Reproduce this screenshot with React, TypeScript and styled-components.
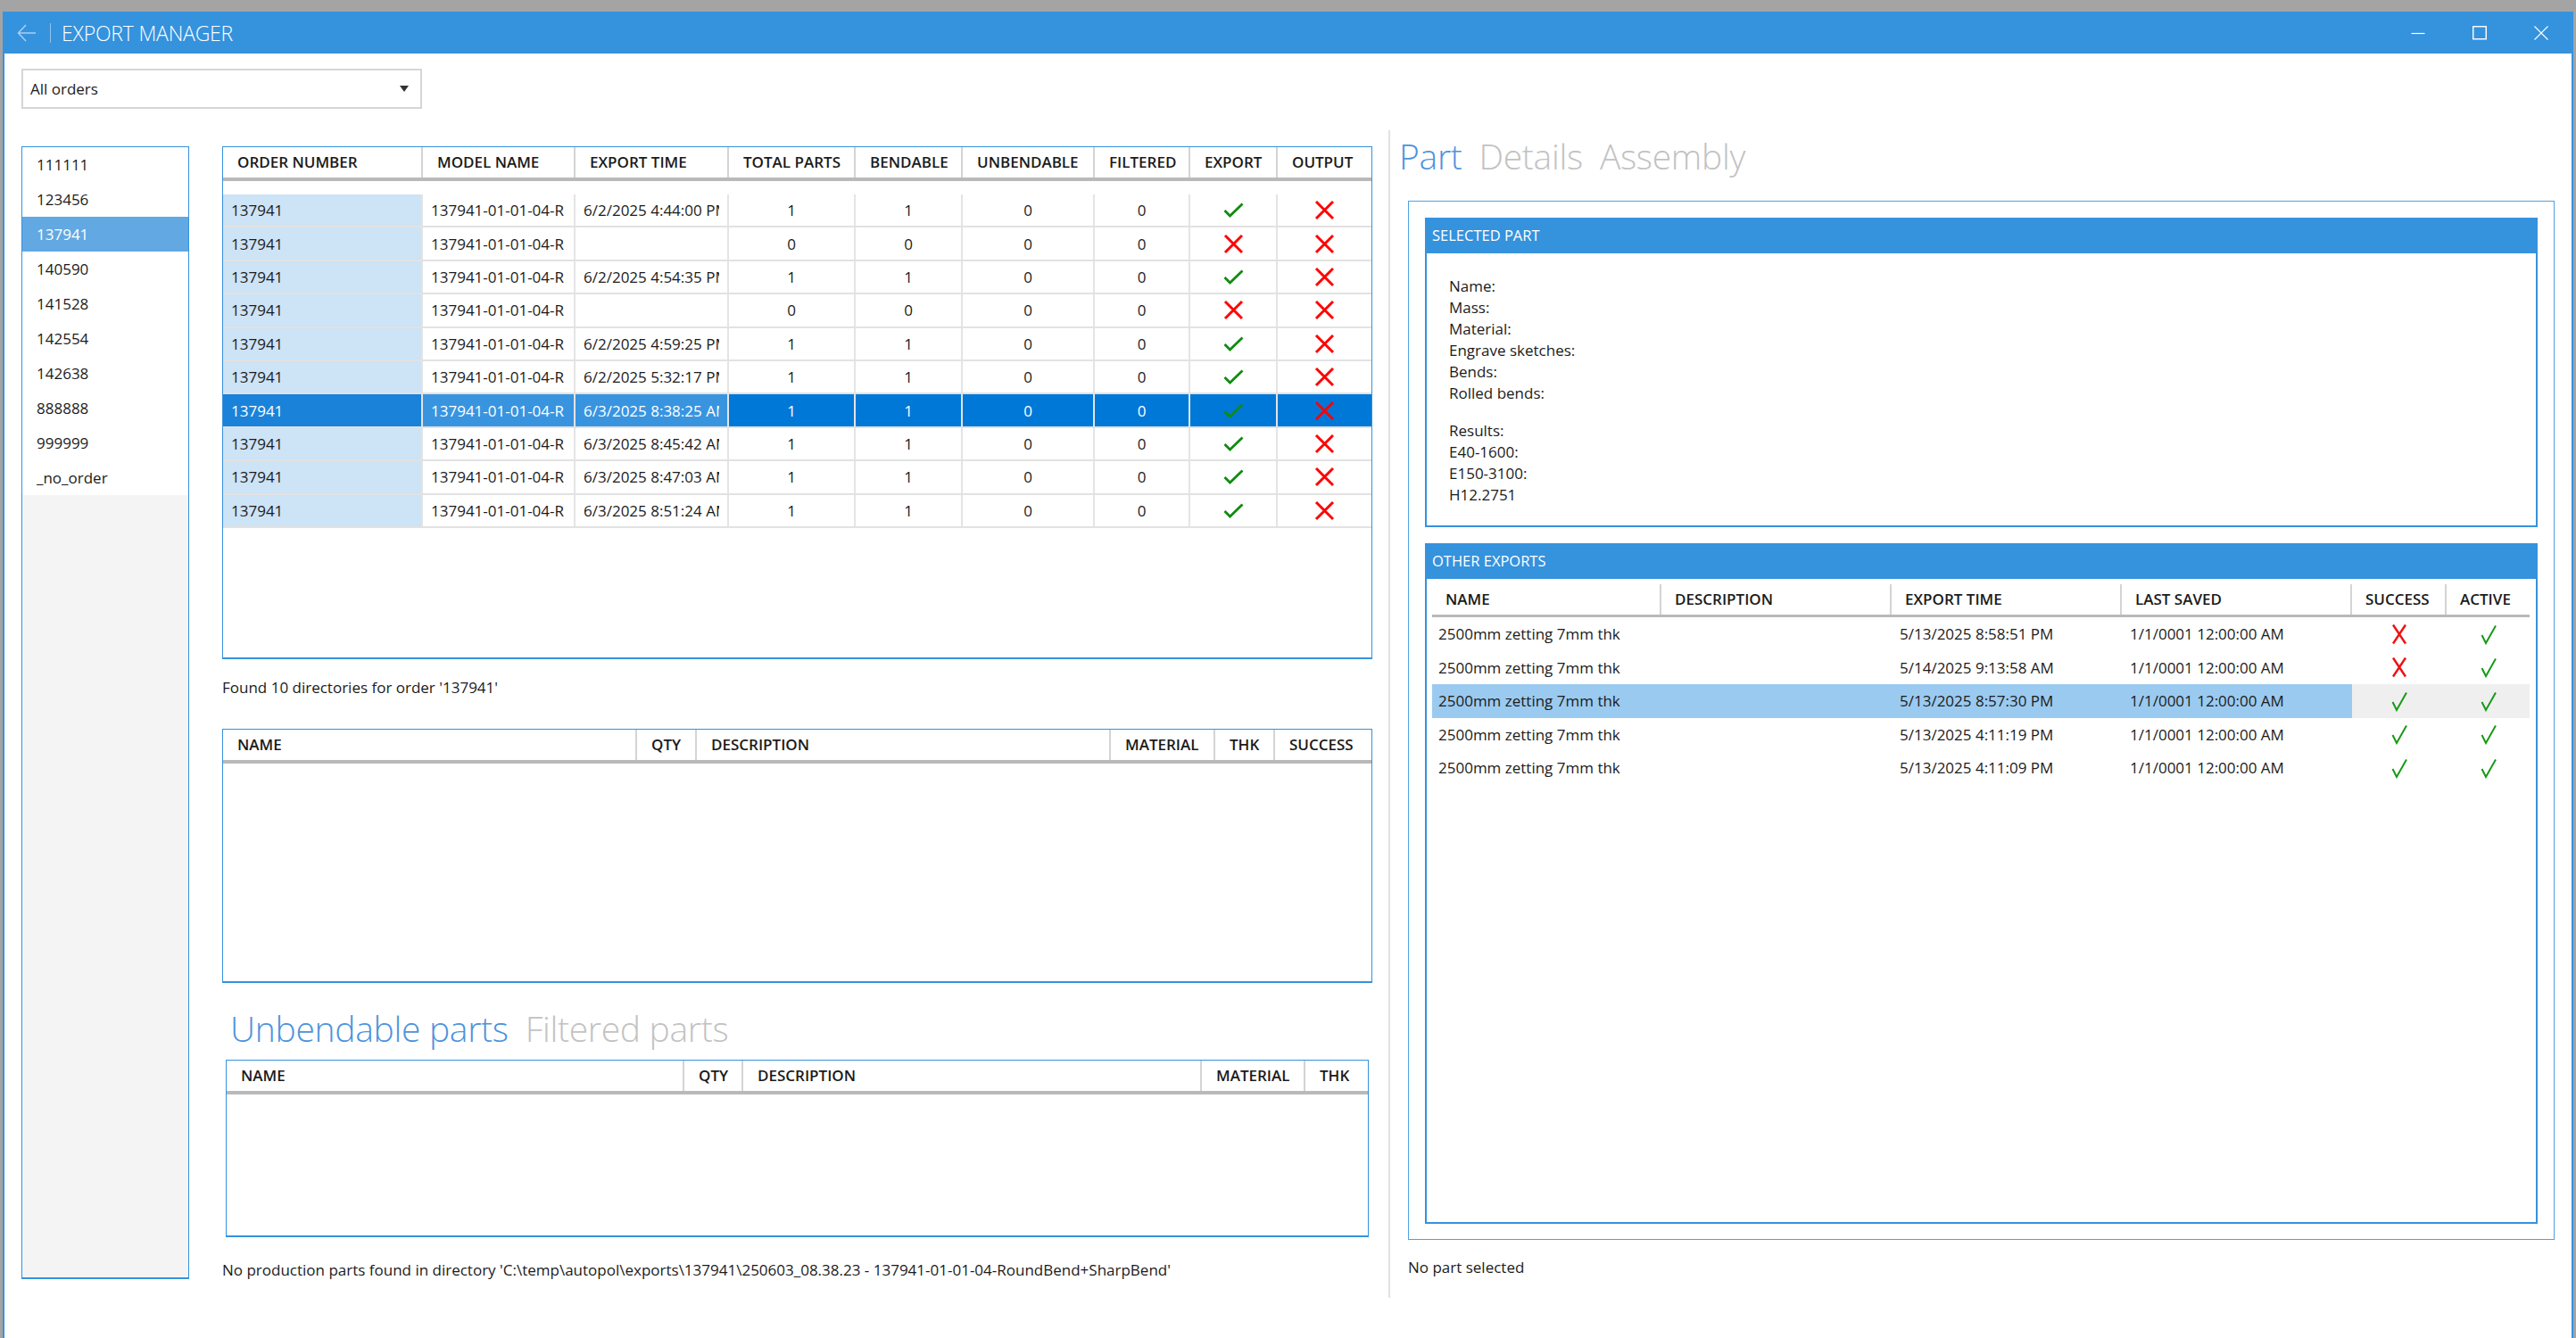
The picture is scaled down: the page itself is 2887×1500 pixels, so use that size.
import React from 'react';
import styled, { createGlobalStyle } from 'styled-components';

const BLUE = '#3592dd';
const FONT = '"Open Sans", "Noto Sans", "Liberation Sans", sans-serif';

const GlobalStyle = createGlobalStyle`
  html, body {
    margin: 0;
    padding: 0;
    background: #a4a4a4;
  }
  body {
    font-family: ${FONT};
    font-size: 17px;
    color: #1b1b1b;
  }
  * {
    box-sizing: border-box;
  }
`;

const Frame = styled.div`
  height: 1500px;
  padding: 13px 3px 0 3px;
`;

const Window = styled.div`
  height: 100%;
  background: #fff;
  border-left: 2px solid ${BLUE};
  border-right: 2px solid ${BLUE};
  display: flex;
  flex-direction: column;
`;

const TitleBar = styled.div`
  height: 47px;
  flex-shrink: 0;
  background: ${BLUE};
  display: flex;
  align-items: center;
  padding-left: 14px;
  color: #fff;
`;

const TitleDivider = styled.div`
  width: 1px;
  height: 22px;
  background: rgba(255, 255, 255, 0.45);
  margin: 0 12px 0 15px;
`;

const Title = styled.div`
  font-size: 23px;
  font-weight: 300;
  letter-spacing: -0.2px;
  flex: 1;
`;

const Controls = styled.div`
  display: flex;
  height: 100%;
`;

const ControlButton = styled.div`
  width: 69px;
  height: 100%;
  display: flex;
  align-items: center;
  justify-content: center;
`;

const Toolbar = styled.div`
  height: 86px;
  flex-shrink: 0;
  padding: 17px 0 0 19px;
`;

const Dropdown = styled.div`
  width: 449px;
  height: 45px;
  border: 2px solid #d6d6d6;
  display: flex;
  align-items: center;
  justify-content: space-between;
  padding: 0 13px 0 8px;
  font-size: 17px;
`;

const Caret = styled.div`
  width: 0;
  height: 0;
  border-left: 5px solid transparent;
  border-right: 5px solid transparent;
  border-top: 7px solid #333;
`;

const Main = styled.div`
  flex: 1;
  display: flex;
  min-height: 0;
`;

const LeftArea = styled.div`
  display: flex;
  gap: 37px;
  padding: 18px 18px 0 19px;
`;

const OrderList = styled.div`
  width: 188px;
  height: 1270px;
  border: 1px solid ${BLUE};
  border-bottom-width: 2px;
  background: #f4f4f4;
  display: flex;
  flex-direction: column;
`;

const OrderItem = styled.div<{ $selected?: boolean }>`
  height: 39px;
  line-height: 39px;
  padding-left: 16px;
  font-size: 17px;
  background: ${p => (p.$selected ? '#62a8e2' : '#fff')};
  color: ${p => (p.$selected ? '#fff' : '#1b1b1b')};
`;

const Middle = styled.div`
  width: 1289px;
  display: flex;
  flex-direction: column;
`;

const TableBox = styled.div<{ $height: number; $inset?: number; $top?: number }>`
  height: ${p => p.$height}px;
  margin: ${p => p.$top ?? 0}px ${p => p.$inset ?? 0}px 0;
  border: 1px solid ${BLUE};
  border-bottom-width: 2px;
  background: #fff;
  overflow: hidden;
  flex-shrink: 0;
`;

const HeaderRow = styled.div<{ $cols: string; $line?: number }>`
  display: grid;
  grid-template-columns: ${p => p.$cols};
  height: ${p => 34 + (p.$line ?? 4)}px;
  border-bottom: ${p => p.$line ?? 4}px solid #b9b9b9;
  background: #fff;
`;

const HeaderCell = styled.div<{ $pad?: number }>`
  padding-left: ${p => p.$pad ?? 16}px;
  line-height: 34px;
  font-size: 17px;
  font-weight: 600;
  color: #1a1a1a;
  white-space: nowrap;
  overflow: hidden;
  border-right: 2px solid #d4d4d4;
  &:last-child {
    border-right: none;
  }
`;

const HeaderGap = styled.div`
  height: 15px;
`;

const BodyRow = styled.div<{ $cols: string; $height?: number; $lined?: boolean }>`
  display: grid;
  grid-template-columns: ${p => p.$cols};
  height: ${p => p.$height ?? 37.4}px;
  border-bottom: ${p => (p.$lined ? '2px solid #e2e2e2' : 'none')};
`;

type Tone = 'key' | 'mid' | 'plain';

const selectedBg: Record<Tone, string> = {
  key: '#1a82d9',
  mid: '#3994e0',
  plain: '#0078d7',
};

const Cell = styled.div<{ $tone?: Tone; $selected?: boolean; $center?: boolean; $lined?: boolean; $bg?: string; $padLeft?: number }>`
  display: flex;
  align-items: center;
  justify-content: ${p => (p.$center ? 'center' : 'flex-start')};
  padding: 0 9px 0 ${p => p.$padLeft ?? 9}px;
  min-width: 0;
  font-size: 17px;
  color: ${p => (p.$selected ? '#fff' : '#1b1b1b')};
  background: ${p =>
    p.$bg
      ? p.$bg
      : p.$selected
      ? selectedBg[p.$tone ?? 'plain']
      : p.$tone === 'key'
      ? '#cde3f6'
      : 'transparent'};
  border-right: ${p => (p.$lined ? '2px solid #e4e4e4' : 'none')};
  &:last-child {
    border-right: none;
  }
`;

const CellText = styled.span`
  display: block;
  overflow: hidden;
  white-space: nowrap;
`;

const StatusText = styled.div<{ $top: number; $left?: number }>`
  margin-top: ${p => p.$top}px;
  margin-left: ${p => p.$left ?? 0}px;
  line-height: 24px;
  font-size: 17px;
  white-space: nowrap;
`;

const TabHeading = styled.div<{ $top: number; $left: number; $height: number }>`
  display: flex;
  gap: 19px;
  margin-top: ${p => p.$top}px;
  margin-left: ${p => p.$left}px;
  height: ${p => p.$height}px;
  line-height: 46px;
  font-size: 39px;
  font-weight: 300;
  letter-spacing: -0.3px;
  flex-shrink: 0;
`;

const Tab = styled.span<{ $active?: boolean }>`
  color: ${p => (p.$active ? '#4d93dc' : '#c2c2c2')};
`;

const Separator = styled.div`
  width: 2px;
  height: 1309px;
  background: #e2e2e2;
  flex-shrink: 0;
`;

const RightArea = styled.div`
  width: 1305px;
  padding-left: 10px;
  display: flex;
  flex-direction: column;
`;

const OuterBox = styled.div`
  margin-left: 10px;
  width: 1285px;
  height: 1165px;
  border: 1.5px solid #4da2e4;
  padding: 18px 18px 17px 18px;
  display: flex;
  flex-direction: column;
  gap: 18px;
`;

const Panel = styled.div<{ $height: number }>`
  height: ${p => p.$height}px;
  border: 2px solid ${BLUE};
  border-top: none;
  display: flex;
  flex-direction: column;
  flex-shrink: 0;
`;

const PanelHeader = styled.div`
  height: 40px;
  background: ${BLUE};
  color: #fff;
  font-size: 16.5px;
  line-height: 40px;
  margin: 0 -2px;
  padding-left: 8px;
`;

const PartInfo = styled.div`
  padding: 25px 0 0 25px;
  display: flex;
  flex-direction: column;
`;

const InfoLine = styled.div<{ $gapBefore?: boolean }>`
  line-height: 24px;
  font-size: 17px;
  margin-top: ${p => (p.$gapBefore ? 18 : 0)}px;
`;

const ExportsTable = styled.div`
  margin: 6px 7px 0 6px;
`;

const GreenCheck = ({ thin }: { thin?: boolean }) =>
  thin ? (
    <svg width="20" height="24" viewBox="0 0 20 24">
      <path d="M2.5 13 L7 22 L18 2.5" fill="none" stroke="#169a16" strokeWidth="2" />
    </svg>
  ) : (
    <svg width="23" height="17" viewBox="0 0 23 17">
      <path d="M1.5 9 L7.5 15 L21.5 1.5" fill="none" stroke="#0f8c0f" strokeWidth="2.8" />
    </svg>
  );

const RedCross = ({ thin }: { thin?: boolean }) =>
  thin ? (
    <svg width="20" height="24" viewBox="0 0 20 24">
      <path d="M3 1.5 L17 22.5 M17 1.5 L3 22.5" fill="none" stroke="#ee1111" strokeWidth="2.4" />
    </svg>
  ) : (
    <svg width="23" height="23" viewBox="0 0 23 23">
      <path d="M2 2 L21 21 M21 2 L2 21" fill="none" stroke="#ff0000" strokeWidth="3" />
    </svg>
  );

const orders = ['111111', '123456', '137941', '140590', '141528', '142554', '142638', '888888', '999999', '_no_order'];

const mainCols = '224px 171px 172px 142px 120px 148px 107px 98px 1fr';
const mainHeaders = ['ORDER NUMBER', 'MODEL NAME', 'EXPORT TIME', 'TOTAL PARTS', 'BENDABLE', 'UNBENDABLE', 'FILTERED', 'EXPORT', 'OUTPUT'];

interface ExportRow {
  time: string;
  total: number;
  exported: boolean;
}

const exportRows: ExportRow[] = [
  { time: '6/2/2025 4:44:00 PM', total: 1, exported: true },
  { time: '', total: 0, exported: false },
  { time: '6/2/2025 4:54:35 PM', total: 1, exported: true },
  { time: '', total: 0, exported: false },
  { time: '6/2/2025 4:59:25 PM', total: 1, exported: true },
  { time: '6/2/2025 5:32:17 PM', total: 1, exported: true },
  { time: '6/3/2025 8:38:25 AM', total: 1, exported: true },
  { time: '6/3/2025 8:45:42 AM', total: 1, exported: true },
  { time: '6/3/2025 8:47:03 AM', total: 1, exported: true },
  { time: '6/3/2025 8:51:24 AM', total: 1, exported: true },
];

const partsCols = '464px 67px 464px 117px 67px 1fr';
const partsHeaders = ['NAME', 'QTY', 'DESCRIPTION', 'MATERIAL', 'THK', 'SUCCESS'];

const unbendCols = '513px 66px 514px 116px 1fr';
const unbendHeaders = ['NAME', 'QTY', 'DESCRIPTION', 'MATERIAL', 'THK'];

const otherCols = '257px 258px 258px 258px 106px 1fr';
const otherHeaders = ['NAME', 'DESCRIPTION', 'EXPORT TIME', 'LAST SAVED', 'SUCCESS', 'ACTIVE'];

const otherExports = [
  { time: '5/13/2025 8:58:51 PM', success: false },
  { time: '5/14/2025 9:13:58 AM', success: false },
  { time: '5/13/2025 8:57:30 PM', success: true },
  { time: '5/13/2025 4:11:19 PM', success: true },
  { time: '5/13/2025 4:11:09 PM', success: true },
];

const partFields = ['Name:', 'Mass:', 'Material:', 'Engrave sketches:', 'Bends:', 'Rolled bends:'];
const resultFields = ['Results:', 'E40-1600:', 'E150-3100:', 'H12.2751'];

const SELECTED_EXPORT = 6;
const SELECTED_OTHER = 2;

export default function App() {
  return (
    <Frame>
      <GlobalStyle />
      <Window>
        <TitleBar>
          <svg width="22" height="20" viewBox="0 0 22 20">
            <path d="M10 1 L1.5 10 L10 19 M1.5 10 H21" fill="none" stroke="#a8d0f2" strokeWidth="1.5" />
          </svg>
          <TitleDivider />
          <Title>EXPORT MANAGER</Title>
          <Controls>
            <ControlButton>
              <svg width="16" height="16" viewBox="0 0 16 16">
                <path d="M0.5 8.5 H15.5" stroke="#fff" strokeWidth="1.2" />
              </svg>
            </ControlButton>
            <ControlButton>
              <svg width="16" height="16" viewBox="0 0 16 16">
                <rect x="0.75" y="0.75" width="14.5" height="14" fill="none" stroke="#fff" strokeWidth="1.4" />
              </svg>
            </ControlButton>
            <ControlButton>
              <svg width="16" height="16" viewBox="0 0 16 16">
                <path d="M0.5 0.5 L15.5 15.5 M15.5 0.5 L0.5 15.5" stroke="#fff" strokeWidth="1.1" />
              </svg>
            </ControlButton>
          </Controls>
        </TitleBar>

        <Toolbar>
          <Dropdown>
            <span>All orders</span>
            <Caret />
          </Dropdown>
        </Toolbar>

        <Main>
          <LeftArea>
            <OrderList>
              {orders.map(o => (
                <OrderItem key={o} $selected={o === '137941'}>
                  {o}
                </OrderItem>
              ))}
            </OrderList>

            <Middle>
              <TableBox $height={575}>
                <HeaderRow $cols={mainCols}>
                  {mainHeaders.map(h => (
                    <HeaderCell key={h}>{h}</HeaderCell>
                  ))}
                </HeaderRow>
                <HeaderGap />
                {exportRows.map((r, i) => {
                  const sel = i === SELECTED_EXPORT;
                  return (
                    <BodyRow key={i} $cols={mainCols} $lined>
                      <Cell $tone="key" $selected={sel} $lined>
                        <CellText>137941</CellText>
                      </Cell>
                      <Cell $tone="mid" $selected={sel} $lined>
                        <CellText>137941-01-01-04-R</CellText>
                      </Cell>
                      <Cell $tone="mid" $selected={sel} $lined>
                        <CellText>{r.time}</CellText>
                      </Cell>
                      <Cell $center $selected={sel} $lined>{r.total}</Cell>
                      <Cell $center $selected={sel} $lined>{r.total}</Cell>
                      <Cell $center $selected={sel} $lined>0</Cell>
                      <Cell $center $selected={sel} $lined>0</Cell>
                      <Cell $center $selected={sel} $lined>
                        {r.exported ? <GreenCheck /> : <RedCross />}
                      </Cell>
                      <Cell $center $selected={sel} $lined>
                        <RedCross />
                      </Cell>
                    </BodyRow>
                  );
                })}
              </TableBox>

              <StatusText $top={20}>Found 10 directories for order '137941'</StatusText>

              <TableBox $height={285} $top={34}>
                <HeaderRow $cols={partsCols}>
                  {partsHeaders.map(h => (
                    <HeaderCell key={h}>{h}</HeaderCell>
                  ))}
                </HeaderRow>
              </TableBox>

              <TabHeading $top={28} $left={9} $height={58}>
                <Tab $active>Unbendable parts</Tab>
                <Tab>Filtered parts</Tab>
              </TabHeading>

              <TableBox $height={199} $inset={4}>
                <HeaderRow $cols={unbendCols}>
                  {unbendHeaders.map(h => (
                    <HeaderCell key={h}>{h}</HeaderCell>
                  ))}
                </HeaderRow>
              </TableBox>

              <StatusText $top={25}>
                No production parts found in directory 'C:\temp\autopol\exports\137941\250603_08.38.23 - 137941-01-01-04-RoundBend+SharpBend'
              </StatusText>
            </Middle>
          </LeftArea>

          <Separator />

          <RightArea>
            <TabHeading $top={6} $left={0} $height={73}>
              <Tab $active>Part</Tab>
              <Tab>Details</Tab>
              <Tab>Assembly</Tab>
            </TabHeading>

            <OuterBox>
              <Panel $height={347}>
                <PanelHeader>SELECTED PART</PanelHeader>
                <PartInfo>
                  {partFields.map(f => (
                    <InfoLine key={f}>{f}</InfoLine>
                  ))}
                  {resultFields.map((f, i) => (
                    <InfoLine key={f} $gapBefore={i === 0}>
                      {f}
                    </InfoLine>
                  ))}
                </PartInfo>
              </Panel>

              <Panel $height={763}>
                <PanelHeader>OTHER EXPORTS</PanelHeader>
                <ExportsTable>
                  <HeaderRow $cols={otherCols} $line={3}>
                    {otherHeaders.map(h => (
                      <HeaderCell key={h} $pad={15}>
                        {h}
                      </HeaderCell>
                    ))}
                  </HeaderRow>
                  {otherExports.map((r, i) => {
                    const sel = i === SELECTED_OTHER;
                    const rowBg = sel ? '#9bcaf0' : undefined;
                    const iconBg = sel ? '#efefef' : undefined;
                    return (
                      <BodyRow key={i} $cols={otherCols} $height={37.5}>
                        <Cell $bg={rowBg} $padLeft={7}>
                          <CellText>2500mm zetting 7mm thk</CellText>
                        </Cell>
                        <Cell $bg={rowBg} />
                        <Cell $bg={rowBg}>
                          <CellText>{r.time}</CellText>
                        </Cell>
                        <Cell $bg={rowBg}>
                          <CellText>1/1/0001 12:00:00 AM</CellText>
                        </Cell>
                        <Cell $center $bg={iconBg}>
                          {r.success ? <GreenCheck thin /> : <RedCross thin />}
                        </Cell>
                        <Cell $center $bg={iconBg}>
                          <GreenCheck thin />
                        </Cell>
                      </BodyRow>
                    );
                  })}
                </ExportsTable>
              </Panel>
            </OuterBox>

            <StatusText $top={19} $left={10}>No part selected</StatusText>
          </RightArea>
        </Main>
      </Window>
    </Frame>
  );
}
